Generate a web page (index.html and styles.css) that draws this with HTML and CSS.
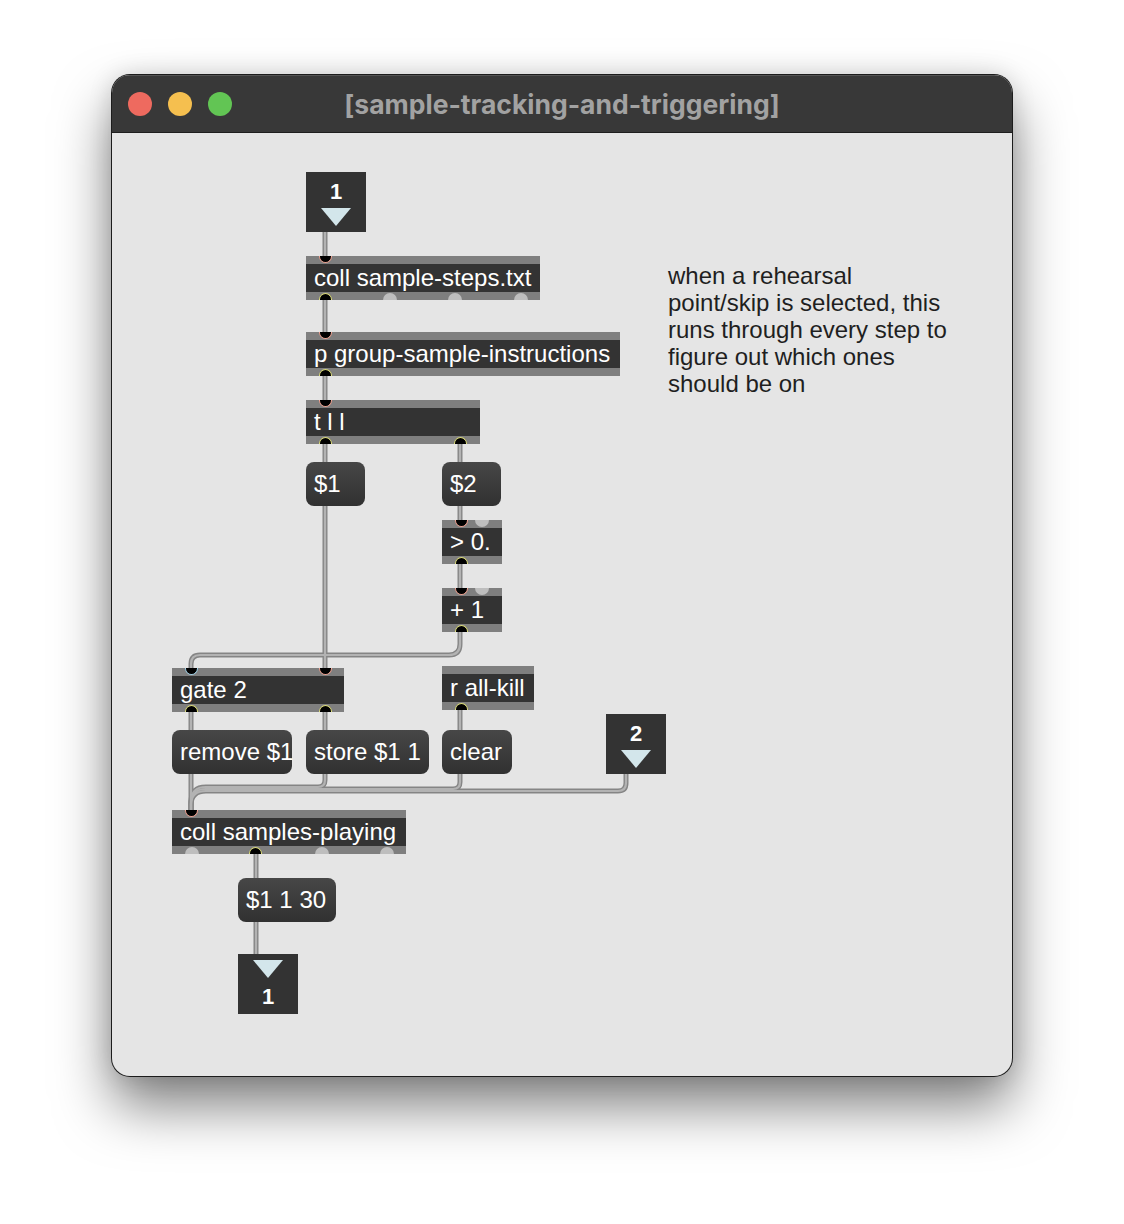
FILE: index.html
```html
<!DOCTYPE html>
<html>
<head>
<meta charset="utf-8">
<link rel="stylesheet" href="styles.css">
</head>
<body>
<div class="stage">
  <div class="window">
    <div class="titlebar">
      <div class="lights">
        <span class="light red"></span>
        <span class="light amber"></span>
        <span class="light green"></span>
      </div>
      <div class="title">[sample-tracking-and-triggering]</div>
      <div></div>
    </div>
    <div class="canvas">
      <svg class="cords" width="900" height="943" viewBox="0 0 900 943">
        <defs>
          <g id="paths">
            <path d="M213 99 V123"/>
            <path d="M213 167 V199"/>
            <path d="M213 243 V267"/>
            <path d="M213 311 V329"/>
            <path d="M348 311 V329"/>
            <path d="M213 373 V535"/>
            <path d="M348 373 V387"/>
            <path d="M348 431 V455"/>
            <path d="M348 499 V511 Q348 522 337 522 H88 Q79 522 79 531 V535"/>
            <path d="M79 579 V597"/>
            <path d="M213 579 V597"/>
            <path d="M348 577 V597"/>
            <path d="M79 641 V677"/>
            <path d="M213 641 V647 Q213 654 206 654 H94 Q79 654 79 669 V677"/>
            <path d="M348 641 V649 Q348 656 341 656 H94 Q79 656 79 671 V677"/>
            <path d="M514 641 V650 Q514 658 506 658 H94 Q79 658 79 672 V677"/>
            <path d="M144 721 V745"/>
            <path d="M144 789 V821"/>
          </g>
        </defs>
        <use href="#paths" class="cord-outer"/>
        <use href="#paths" class="cord-inner"/>
      </svg>

      <div class="io inlet1">
        <span class="io-num">1</span>
        <span class="tri"></span>
      </div>

      <div class="obj coll1">coll sample-steps.txt
        <span class="port in salmon x19"></span>
        <span class="port out yellow x19"></span>
        <span class="port out idle x84"></span>
        <span class="port out idle x149"></span>
        <span class="port out idle x215"></span>
      </div>

      <div class="obj pgroup">p group-sample-instructions
        <span class="port in salmon x19"></span>
        <span class="port out yellow x19"></span>
      </div>

      <div class="obj trig">t l l
        <span class="port in salmon x19"></span>
        <span class="port out yellow x19"></span>
        <span class="port out yellow x154"></span>
      </div>

      <div class="msg m1">$1</div>
      <div class="msg m2">$2</div>

      <div class="obj gt">&gt; 0.
        <span class="port in salmon x19"></span>
        <span class="port in idle x40"></span>
        <span class="port out yellow x19"></span>
      </div>

      <div class="obj plus">+ 1
        <span class="port in salmon x19"></span>
        <span class="port in idle x40"></span>
        <span class="port out yellow x19"></span>
      </div>

      <div class="obj gate">gate 2
        <span class="port in blue x19"></span>
        <span class="port in salmon x153"></span>
        <span class="port out yellow x19"></span>
        <span class="port out yellow x153"></span>
      </div>

      <div class="obj rkill">r all-kill
        <span class="port out yellow x19"></span>
      </div>

      <div class="msg remove">remove $1</div>
      <div class="msg store">store $1 1</div>
      <div class="msg clear">clear</div>

      <div class="io inlet2">
        <span class="io-num">2</span>
        <span class="tri"></span>
      </div>

      <div class="obj coll2">coll samples-playing
        <span class="port in salmon x19"></span>
        <span class="port out idle x19"></span>
        <span class="port out yellow x84"></span>
        <span class="port out idle x150"></span>
        <span class="port out idle x215"></span>
      </div>

      <div class="msg m3">$1 1 30</div>

      <div class="io outlet1">
        <span class="tri"></span>
        <span class="io-num">1</span>
      </div>

      <p class="comment">when a rehearsal<br>point/skip is selected, this<br>runs through every step to<br>figure out which ones<br>should be on</p>
    </div>
  </div>
</div>
</body>
</html>
```

FILE: styles.css
```css
html, body {
  margin: 0;
  padding: 0;
  background: #ffffff;
}

.stage {
  padding: 75px 0 0 112px;
  height: 1224px;
  box-sizing: border-box;
}

.window {
  width: 900px;
  height: 1001px;
  border-radius: 18px;
  overflow: hidden;
  display: flex;
  flex-direction: column;
  background: #e5e5e5;
  box-shadow: 0 0 0 1px #1c1c1c, 0 30px 55px rgba(0, 0, 0, 0.5), 0 0 24px rgba(0, 0, 0, 0.14);
}

.titlebar {
  flex: none;
  height: 57px;
  background: #383838;
  border-bottom: 1px solid #1e1e1e;
  box-shadow: inset 0 1px 0 rgba(255, 255, 255, 0.14);
  display: grid;
  grid-template-columns: 1fr auto 1fr;
  align-items: center;
}

.lights {
  display: flex;
  gap: 16px;
  padding-left: 16px;
}

.light {
  width: 24px;
  height: 24px;
  border-radius: 50%;
  display: block;
}
.red { background: #ee6a5f; }
.amber { background: #f5bf4f; }
.green { background: #62c554; }

.title {
  font-family: Inter, "Liberation Sans", sans-serif;
  font-weight: 700;
  font-size: 26.5px;
  color: #a2a2a2;
  white-space: nowrap;
  padding-top: 0;
}

.canvas {
  flex: 1;
  position: relative;
  font-family: "Liberation Sans", Arial, sans-serif;
}

.cords {
  position: absolute;
  left: 0;
  top: 0;
}
.cord-outer {
  fill: none;
  stroke: #858585;
  stroke-width: 5;
}
.cord-inner {
  fill: none;
  stroke: #b3b3b3;
  stroke-width: 2.2;
}

/* patcher objects */
.obj {
  position: absolute;
  box-sizing: border-box;
  height: 44px;
  background: #333333;
  border-top: 8px solid #7f7f7f;
  border-bottom: 8px solid #7f7f7f;
  color: #ffffff;
  font-size: 24px;
  line-height: 28px;
  padding-left: 8px;
  white-space: nowrap;
}

.msg {
  position: absolute;
  box-sizing: border-box;
  height: 44px;
  border-radius: 8px;
  background: linear-gradient(#474747, #313131);
  color: #ffffff;
  font-size: 24px;
  line-height: 44px;
  padding-left: 8px;
  white-space: nowrap;
}

.port {
  position: absolute;
  box-sizing: border-box;
  width: 13px;
  height: 7px;
  background: #000;
  border: 1.5px solid transparent;
}
.port.in {
  top: -8px;
  border-top: 0;
  border-radius: 0 0 7px 7px;
}
.port.out {
  bottom: -8px;
  border-bottom: 0;
  border-radius: 7px 7px 0 0;
}
.port.salmon { border-color: #f2a493; }
.port.yellow { border-color: #dede7a; }
.port.blue { border-color: #a3d4ea; }
.port.idle {
  background: #bebebe;
  border: 0;
  width: 14px;
}

.x19 { left: 12.5px; }
.x40 { left: 33px; }
.x84 { left: 77px; }
.x149 { left: 142px; }
.x150 { left: 143px; }
.x153 { left: 146.5px; }
.x154 { left: 147.5px; }
.x215 { left: 208px; }

/* inlets / outlets */
.io {
  position: absolute;
  box-sizing: border-box;
  width: 60px;
  height: 60px;
  background: #333333;
  display: flex;
  flex-direction: column;
  align-items: center;
}
.io-num {
  color: #ffffff;
  font-weight: 700;
  font-size: 22px;
  line-height: 22px;
  display: block;
}
.tri {
  display: block;
  width: 30px;
  height: 18px;
  background: #d3e6eb;
  clip-path: polygon(0 0, 100% 0, 50% 100%);
}
.inlet1, .inlet2 {
  padding-top: 9px;
  gap: 5px;
}
.outlet1 {
  padding-top: 6px;
  gap: 8px;
}

.inlet1 { left: 194px; top: 39px; }
.coll1 { left: 194px; top: 123px; width: 234px; }
.pgroup { left: 194px; top: 199px; width: 314px; }
.trig { left: 194px; top: 267px; width: 174px; }
.m1 { left: 194px; top: 329px; width: 59px; }
.m2 { left: 330px; top: 329px; width: 59px; }
.gt { left: 330px; top: 387px; width: 60px; }
.plus { left: 330px; top: 455px; width: 60px; }
.gate { left: 60px; top: 535px; width: 172px; }
.rkill { left: 330px; top: 533px; width: 92px; }
.remove { left: 60px; top: 597px; width: 120px; }
.store { left: 194px; top: 597px; width: 123px; }
.clear { left: 330px; top: 597px; width: 70px; }
.inlet2 { left: 494px; top: 581px; }
.coll2 { left: 60px; top: 677px; width: 234px; }
.m3 { left: 126px; top: 745px; width: 98px; }
.outlet1 { left: 126px; top: 821px; }

.comment {
  position: absolute;
  left: 556px;
  top: 129px;
  margin: 0;
  font-size: 24px;
  line-height: 27px;
  color: #1f1f1f;
  white-space: nowrap;
}
```
